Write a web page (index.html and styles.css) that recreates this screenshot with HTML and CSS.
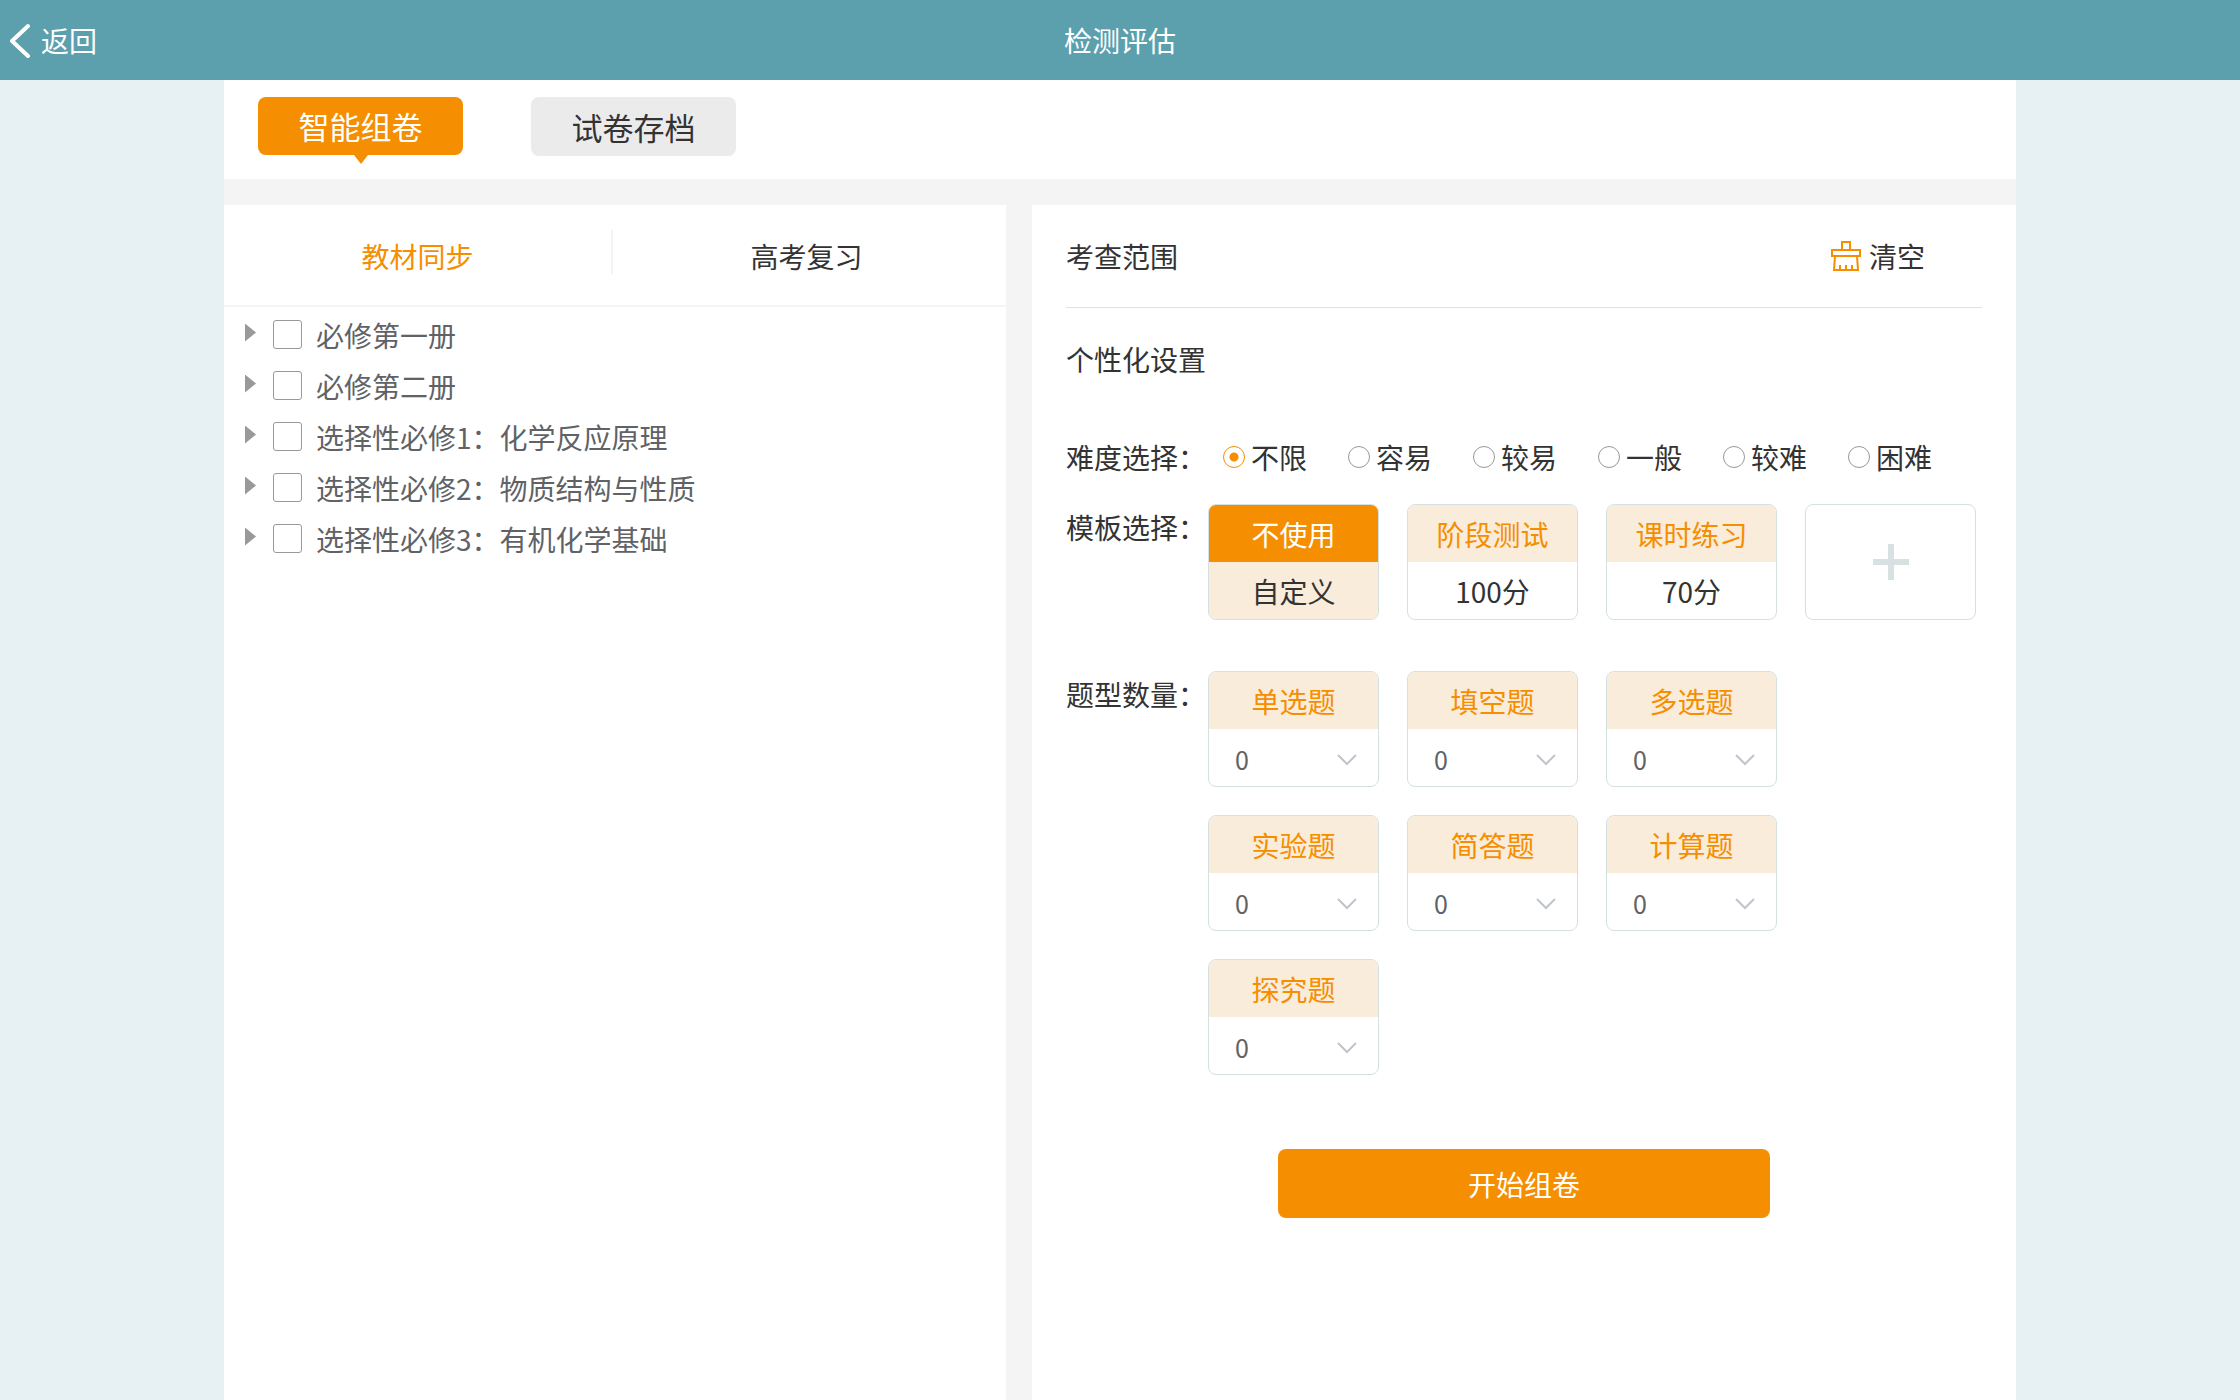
FILE: index.html
```html
<!DOCTYPE html>
<html lang="zh-CN">
<head>
<meta charset="UTF-8">
<meta name="viewport" content="width=device-width, initial-scale=1.0">
<title>检测评估</title>
<link rel="stylesheet" href="styles.css">
</head>
<body>
<header class="topbar">
  <a class="back" href="#">
    <svg class="back-icon" viewBox="0 0 22 36"><path d="M19 4 L3 19 L19 34"/></svg>
    返回
  </a>
  <h1 class="topbar-title">检测评估</h1>
</header>

<div class="page">
  <nav class="tabs">
    <button class="tab active" type="button">智能组卷</button>
    <button class="tab" type="button">试卷存档</button>
  </nav>

  <main class="panels">
    <section class="panel panel-left">
      <div class="source-tabs">
        <button class="source-tab active" type="button">教材同步</button>
        <button class="source-tab" type="button">高考复习</button>
      </div>
      <ul class="tree">
        <li class="tree-row"><button class="tree-arrow" type="button" aria-label="展开"></button><label class="tree-label"><input class="check" type="checkbox">必修第一册</label></li>
        <li class="tree-row"><button class="tree-arrow" type="button" aria-label="展开"></button><label class="tree-label"><input class="check" type="checkbox">必修第二册</label></li>
        <li class="tree-row"><button class="tree-arrow" type="button" aria-label="展开"></button><label class="tree-label"><input class="check" type="checkbox">选择性必修1：化学反应原理</label></li>
        <li class="tree-row"><button class="tree-arrow" type="button" aria-label="展开"></button><label class="tree-label"><input class="check" type="checkbox">选择性必修2：物质结构与性质</label></li>
        <li class="tree-row"><button class="tree-arrow" type="button" aria-label="展开"></button><label class="tree-label"><input class="check" type="checkbox">选择性必修3：有机化学基础</label></li>
      </ul>
    </section>

    <form class="panel panel-right">
      <div class="scope">
        <h2 class="heading">考查范围</h2>
        <button class="clear" type="button">
          <svg class="clear-icon" viewBox="0 0 30 32"><path d="M11 10 V2 H19 V10 M1 10 H29 V16 H1 Z M4 16 L3 30 H27 L26 16 M9 30 V25 M15 30 V25 M21 30 V25"/></svg>
          清空
        </button>
      </div>
      <h2 class="heading heading-settings">个性化设置</h2>

      <div class="field field-level">
        <span class="field-label">难度选择：</span>
        <div class="levels">
          <label class="level"><input class="radio" type="radio" name="level" checked>不限</label>
          <label class="level"><input class="radio" type="radio" name="level">容易</label>
          <label class="level"><input class="radio" type="radio" name="level">较易</label>
          <label class="level"><input class="radio" type="radio" name="level">一般</label>
          <label class="level"><input class="radio" type="radio" name="level">较难</label>
          <label class="level"><input class="radio" type="radio" name="level">困难</label>
        </div>
      </div>

      <div class="field field-cards">
        <span class="field-label">模板选择：</span>
        <div class="cards">
          <button class="card active" type="button"><span class="card-head">不使用</span><span class="card-body">自定义</span></button>
          <button class="card" type="button"><span class="card-head">阶段测试</span><span class="card-body">100分</span></button>
          <button class="card" type="button"><span class="card-head">课时练习</span><span class="card-body">70分</span></button>
          <button class="card card-add" type="button" aria-label="添加模板">
            <svg class="add-icon" viewBox="0 0 36 36"><path d="M18 0 V36 M0 18 H36"/></svg>
          </button>
        </div>
      </div>

      <div class="field field-cards field-types">
        <span class="field-label">题型数量：</span>
        <div class="cards cards-types">
          <div class="card">
            <label class="card-head" for="q1">单选题</label>
            <div class="picker"><select id="q1"><option>0</option><option>1</option><option>2</option></select><svg class="chevron" viewBox="0 0 20 12"><path d="M1 1 L10 10 L19 1"/></svg></div>
          </div>
          <div class="card">
            <label class="card-head" for="q2">填空题</label>
            <div class="picker"><select id="q2"><option>0</option><option>1</option><option>2</option></select><svg class="chevron" viewBox="0 0 20 12"><path d="M1 1 L10 10 L19 1"/></svg></div>
          </div>
          <div class="card">
            <label class="card-head" for="q3">多选题</label>
            <div class="picker"><select id="q3"><option>0</option><option>1</option><option>2</option></select><svg class="chevron" viewBox="0 0 20 12"><path d="M1 1 L10 10 L19 1"/></svg></div>
          </div>
          <div class="card">
            <label class="card-head" for="q4">实验题</label>
            <div class="picker"><select id="q4"><option>0</option><option>1</option><option>2</option></select><svg class="chevron" viewBox="0 0 20 12"><path d="M1 1 L10 10 L19 1"/></svg></div>
          </div>
          <div class="card">
            <label class="card-head" for="q5">简答题</label>
            <div class="picker"><select id="q5"><option>0</option><option>1</option><option>2</option></select><svg class="chevron" viewBox="0 0 20 12"><path d="M1 1 L10 10 L19 1"/></svg></div>
          </div>
          <div class="card">
            <label class="card-head" for="q6">计算题</label>
            <div class="picker"><select id="q6"><option>0</option><option>1</option><option>2</option></select><svg class="chevron" viewBox="0 0 20 12"><path d="M1 1 L10 10 L19 1"/></svg></div>
          </div>
          <div class="card">
            <label class="card-head" for="q7">探究题</label>
            <div class="picker"><select id="q7"><option>0</option><option>1</option><option>2</option></select><svg class="chevron" viewBox="0 0 20 12"><path d="M1 1 L10 10 L19 1"/></svg></div>
          </div>
        </div>
      </div>

      <button class="start" type="button">开始组卷</button>
    </form>
  </main>
</div>
</body>
</html>
```

FILE: styles.css
```css
:root {
  --teal: #5c9fad; --bg: #e7f0f2; --gap: #f4f4f4;
  --orange: #f58e00; --orange-light: #faecdb;
  --text: #333333; --text-tree: #606266;
  --border: #d5e0e0; --muted: #c0c4cc;
}
* { box-sizing: border-box; margin: 0; padding: 0; }
body { min-height: 100vh; display: flex; flex-direction: column; font-family: 'Noto Sans CJK SC', sans-serif; font-size: 28px; line-height: 40px; color: var(--text); background: var(--bg); }
button, select { font: inherit; color: inherit; background: none; border: none; cursor: pointer; }
svg { display: block; fill: none; flex-shrink: 0; }

.topbar { height: 80px; display: grid; grid-template-columns: 1fr auto 1fr; align-items: center; padding: 0 9px; background: var(--teal); color: white; }
.back { display: flex; align-items: center; gap: 10px; color: white; text-decoration: none; }
.back-icon { width: 22px; height: 36px; stroke: white; stroke-width: 4; stroke-linecap: round; stroke-linejoin: round; }
.topbar-title { font-size: 28px; font-weight: 400; }

.page { width: 80%; margin: 0 auto; flex: 1; display: flex; flex-direction: column; background: var(--gap); }
.tabs { display: flex; align-items: flex-start; gap: 68px; padding: 17px 34px 23px; background: white; }
.tab { position: relative; width: 205px; height: 59px; border-radius: 8px; background: #ebebeb; font-size: 31px; }
.tab.active { height: 58px; background: var(--orange); color: white; }
.tab.active::after { content: ''; position: absolute; top: 100%; left: 50%; margin-left: -7px; border: 7px solid transparent; border-top: 9px solid var(--orange); border-bottom: none; }

.panels { flex: 1; display: grid; grid-template-columns: 782fr 984fr; gap: 26px; padding-top: 26px; }
.panel { background: white; }

.source-tabs { display: flex; padding: 25px 6px 31px 0; border-bottom: 2px solid var(--gap); }
.source-tab { flex: 1; height: 44px; padding-top: 6px; }
.source-tab.active { color: var(--orange); border-right: 2px solid var(--gap); }

.tree { list-style: none; padding: 2px 21px; }
.tree-row { display: flex; align-items: center; height: 51px; color: var(--text-tree); }
.tree-arrow { width: 11px; height: 18px; margin-bottom: 4px; background: #999999; clip-path: polygon(0 0, 100% 50%, 0 100%); }
.tree-label { display: flex; align-items: center; gap: 14px; margin-left: 17px; }
.check { appearance: none; width: 29px; height: 29px; border: 1px solid #999999; border-radius: 3px; background: white; }
.check:checked { background: var(--orange); }

.panel-right { display: flex; flex-direction: column; padding: 0 34px; }
.scope { display: flex; justify-content: space-between; padding: 31px 57px 31px 0; border-bottom: 1px solid #e0e0e0; }
.heading { font-size: 28px; font-weight: 400; }
.heading-settings { margin-top: 31px; }
.clear { display: flex; align-items: center; gap: 8px; }
.clear-icon { width: 30px; height: 32px; stroke: var(--orange); stroke-width: 2; }

.field { display: flex; }
.field-label { width: 142px; flex-shrink: 0; white-space: nowrap; }
.field-level { padding-top: 58px; }
.field-cards { padding-top: 27px; }
.field-cards .field-label { padding-top: 3px; }
.field-types { padding-top: 51px; }
.levels { display: flex; flex-wrap: wrap; gap: 41px; padding-left: 15px; }
.level { display: flex; align-items: center; gap: 6px; }
.radio { appearance: none; width: 22px; height: 22px; border: 1px solid #999999; border-radius: 50%; }
.radio:checked { border-color: var(--orange); background: radial-gradient(circle, var(--orange) 4px, transparent 5px); }

.cards { display: grid; grid-template-columns: repeat(4, 171px); gap: 28px; }
.cards-types { grid-template-columns: repeat(3, 171px); }
.card { display: flex; flex-direction: column; height: 116px; border: 1px solid var(--border); border-radius: 8px; overflow: hidden; background: white; }
.card-head, .card-body { flex: 1; display: flex; align-items: center; justify-content: center; width: 100%; }
.card-head { background: var(--orange-light); color: var(--orange); }
.card.active .card-head { background: var(--orange); color: white; }
.card.active .card-body { background: var(--orange-light); }
.card-add { align-items: center; justify-content: center; }
.add-icon { width: 36px; height: 36px; stroke: #d7e1e1; stroke-width: 6; }

/* select and chevron share one grid cell */
.picker { flex: 1; display: grid; align-items: center; }
.picker select { grid-area: 1 / 1; width: 100%; height: 100%; padding: 2px 48px 0 26px; appearance: none; font-size: 25px; color: var(--text-tree); }
.chevron { grid-area: 1 / 1; justify-self: end; width: 20px; height: 12px; margin: 4px 21px 0 0; stroke: var(--muted); stroke-width: 2; pointer-events: none; }

.start { width: 492px; height: 69px; margin: 74px auto 0; border-radius: 8px; background: var(--orange); color: white; }
```
